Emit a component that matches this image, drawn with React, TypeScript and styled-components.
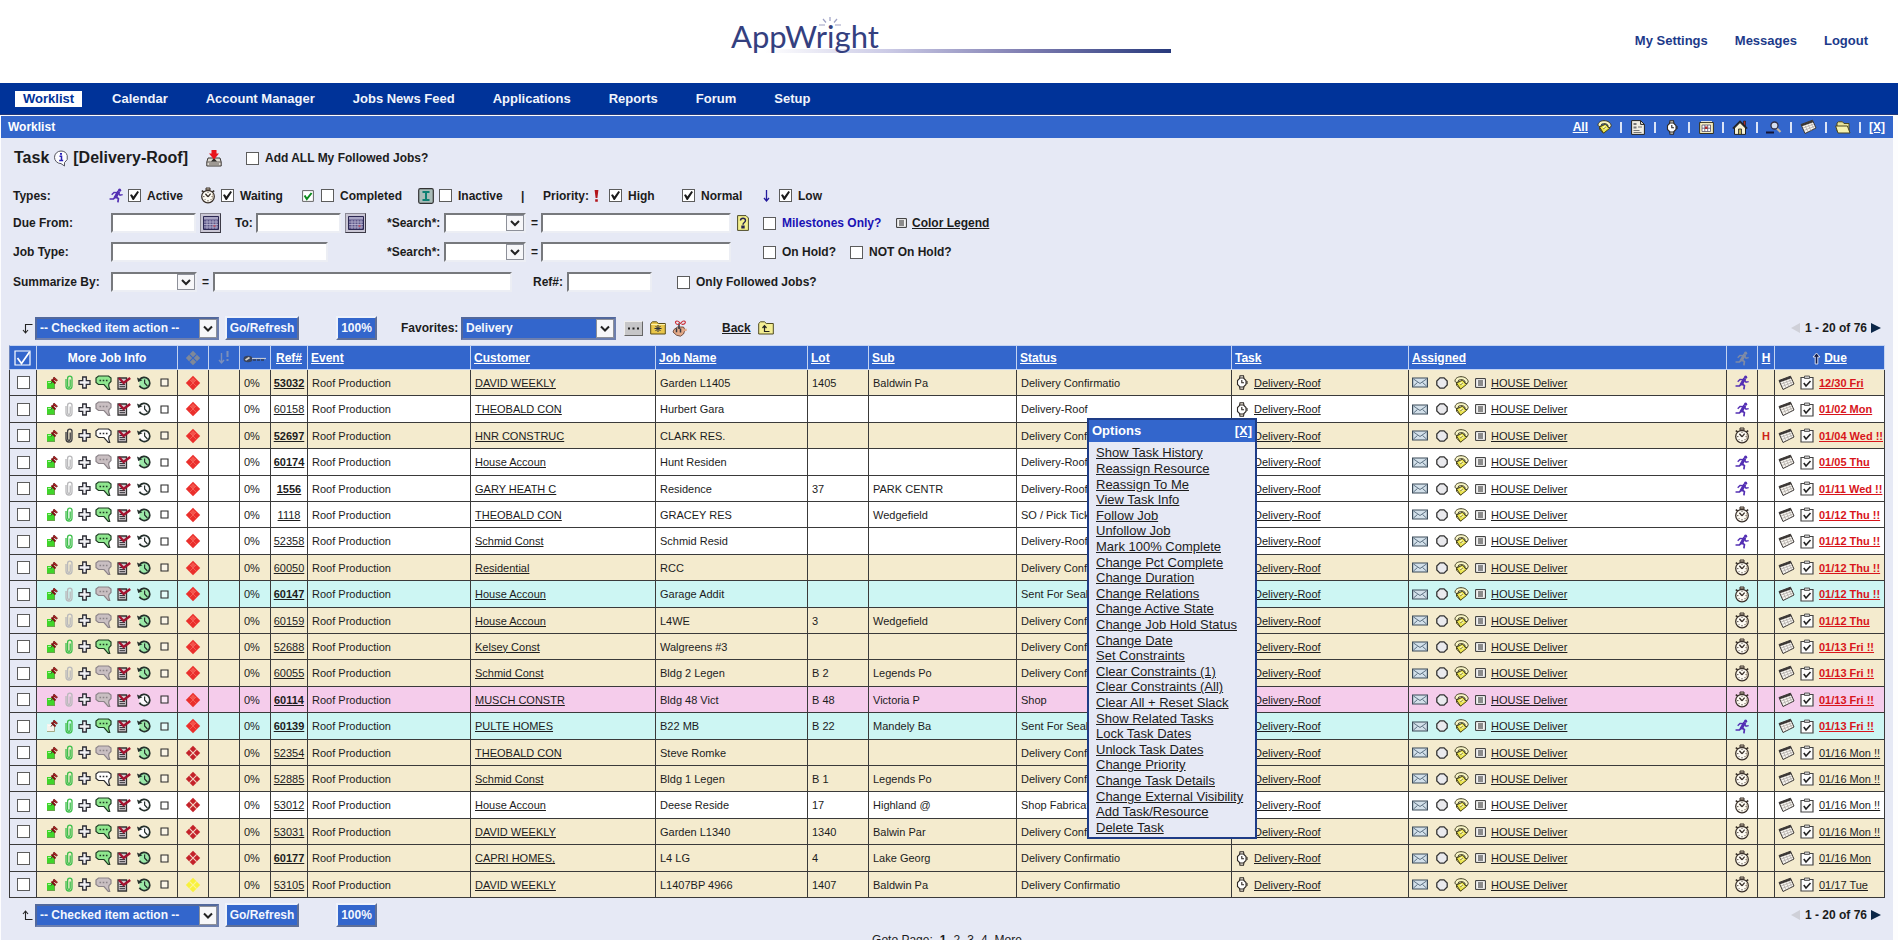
import React from "react";
import styled, { createGlobalStyle, css } from "styled-components";

const sans = '"Liberation Sans", Arial, sans-serif';
const c = {
  navy: "#003399",
  blue: "#3366cc",
  panel: "#e6e9f5",
  ink: "#1c1c1c",
  red: "#d8151b",
  line: "#3a3a3a",
};

const Global = createGlobalStyle`
  * { box-sizing: border-box; }
  body { margin: 0; background: #fdfdfe; font-family: ${sans}; font-size: 12px; color: ${c.ink}; }
  a { color: inherit; }
  svg { display: block; flex: none; }
`;

/* ---------- icons ---------- */

const Runner = ({ color = "#5430b4" }: { color?: string }) => (
  <svg width="14" height="15" viewBox="0 0 14 15" fill="none" stroke={color} strokeWidth="1.7" strokeLinecap="square">
    <circle cx="10.6" cy="2.2" r="1.6" fill={color} stroke="none" />
    <path d="M9 4.8 6.800 8.600" strokeWidth="3.200" />
    <path d="M8.400 4.600 5 4.400 3.200 6.200M9.800 5.400l1.200 1.800 2 -.4" strokeWidth="1.400" />
    <path d="M6.800 8.800 4.400 11H1.400M7 8.800l2.400 1.800-.4 3" />
  </svg>
);

const Stopwatch = () => (
  <svg width="16" height="17" viewBox="0 0 16 17" fill="none" stroke="#3a312b">
    <path d="M6 1h4v2H6z" fill="#d8cdb8" />
    <path d="M1.800 3.600l2 1.600M14.200 3.600l-2 1.600" strokeWidth="1.600" />
    <circle cx="8" cy="9.600" r="6.300" fill="#fdfaf2" strokeWidth="1.300" />
    <path d="M8 9.800 5.400 6.800M8 9.800l2.600-3.200" strokeWidth="1.300" />
    <path d="M8 4.600v1.200M8 13.200v1.200M3.200 9.600h1.200M11.600 9.600h1.200M4.800 12.800l.6-.6M11.200 12.800l-.6-.6" />
    <path d="M12.600 7c.8 2 .4 4.600-1.400 6.200" stroke="#b5a48c" />
  </svg>
);

const Watch = ({ light }: { light?: boolean }) => (
  <svg width="12" height="15" viewBox="0 0 12 15" fill="none" stroke="#2f2a26" strokeWidth="1.100">
    <path d="M3.500 3.500 4 .7h3.500l.5 2.800M3.500 11.500 4 14.300h3.500l.5-2.800" fill={light ? "#d8d4c8" : "#efe9dc"} />
    <path d="M4 3h3.500l2.500 2.500v4L7.500 12H4L1.500 9.500v-4z" fill="#fff" />
    <path d="M5.800 5v2.800H8M11 6v3" />
  </svg>
);

const Clip = ({ tone }: { tone: string }) => (
  <svg width="8" height="15" viewBox="0 0 8 15" fill="none" stroke={tone} strokeWidth="1.300">
    <path d="M1 4v7a3 3 0 0 0 6 0V3.300a2.200 2.200 0 0 0-4.400 0V11a1.300 1.300 0 0 0 2.600 0V4.500" />
  </svg>
);

const Pin = ({ fill }: { fill: string }) => (
  <svg width="12" height="14" viewBox="0 0 12 14">
    <path d="M1 5h6v1h2v7H1z" fill={fill} />
    <path d="M1 12.500h7.500V8" stroke="#7c8a5c" fill="none" strokeWidth=".7" />
    <path d="M2 6.500h3" stroke="#fff" opacity=".6" />
    <path d="m5 7.500 2-2.500" stroke="#333" />
    <path d="m5.500 3.500 4 4M7.500 3.800 9 2.200" stroke="#7c1010" strokeWidth="1.800" />
    <path d="m8 1 3.600 3.200-1.400 1L7 2.200z" fill="#b32020" stroke="#4d0b0b" strokeWidth=".5" />
  </svg>
);

const Plus = () => (
  <svg width="13" height="13" viewBox="0 0 13 13">
    <path d="M4.700 1h3.600v3.700H12v3.600H8.300V12H4.700V8.300H1V4.700h3.700z" fill="#f0f0f4" stroke="#2d2d35" strokeWidth="1.300" />
  </svg>
);

const Speech = ({ fill, line }: { fill: string; line: string }) => (
  <svg width="17" height="16" viewBox="0 0 17 16">
    <path d="M3.500 1h10l2.500 2v3.500l-2 2-.3 2.300 1 3.500h-1.500L9 9.500H3.500L1 7.500V3z" fill={fill} stroke={line} strokeWidth="1.200" />
    <path d="M4.500 5.500h1.600M7.700 5.500h1.600M10.900 5.500h1.600" stroke={line} strokeWidth="1.500" />
  </svg>
);

const Notes = () => (
  <svg width="14" height="14" viewBox="0 0 14 14">
    <path d="M1 2h8.500v11H1z" fill="#d3ccd0" stroke="#333" strokeWidth="1.300" />
    <path d="M2.500 6.500h5.500M2.500 8.600h5.500M2.500 10.700h5.500" stroke="#2d2d33" />
    <path d="m2 2 4.600 5L13.200 2" stroke="#a3122f" strokeWidth="2.400" fill="none" />
  </svg>
);

const History = ({ fill }: { fill: string }) => (
  <svg width="15" height="14" viewBox="0 0 15 14">
    <path d="M2.600 3.800A5.600 5.600 0 1 1 2.400 9.800" fill={fill} stroke="#25302c" strokeWidth="1.700" />
    <path d="M0 1.600 1.200 6l4.200-1.800z" fill="#25302c" />
    <path d="M7.600 3.500V7l2.800 3" stroke="#25302c" strokeWidth="1.200" fill="none" />
  </svg>
);

const Box = () => (
  <svg width="9" height="9" viewBox="0 0 9 9">
    <path d="M1 1h7v7H1z" fill="#fff" fillOpacity=".5" stroke="#2b2b2b" strokeWidth="1.100" />
  </svg>
);

const Diamond = ({ kind }: { kind: "solid" | "quad" | "yellow" | "head" }) => {
  const f = { solid: "#ea2f2c", quad: "#c4222a", yellow: "#f8f13c", head: "#7f8899" }[kind];
  const g = { solid: "#fa7a70", quad: "#f4d9c8", yellow: "#faf59a", head: "#3366cc" }[kind];
  return (
    <svg width="16" height="16" viewBox="0 0 16 16">
      <path d="M8 .8 15.200 8 8 15.200.8 8z" fill={f} />
      {kind === "solid" && <path d="M8 2.600 10.600 5.200 8 7.800 5.400 5.200z" fill="#f4544c" />}
      <path d="M4.400 4.400l7.200 7.200M11.600 4.400l-7.200 7.200" stroke={g} strokeWidth={kind === "solid" ? 0.6 : 1.1} />
    </svg>
  );
};

const Phone = () => (
  <svg width="15" height="14" viewBox="0 0 15 14">
    <path d="M2.500 7 8.500 4.200l4 4.300-6 4.700z" fill="#ece54e" stroke="#4c4718" />
    <path d="M2.500 7v2.200l4 4" fill="none" stroke="#4c4718" />
    <path d="M1 5.200C1 2.600 3.500.7 7 .7c3.800 0 6.800 2 7.200 5l-1 2-2-.3-.4-2.400C9.500 3.600 7 3.200 4.600 4.200L4 6.200l-2 .3z" fill="#f8f5c4" stroke="#3d3a20" />
    <path d="M6 7.500l2-1M7.500 9l2-1" stroke="#fffde0" strokeWidth="1.200" />
    <path d="M6.200 8.800l2.600-1.200" stroke="#5f5a1c" strokeWidth=".7" />
  </svg>
);

const Envelope = () => (
  <svg width="16" height="11" viewBox="0 0 16 11" fill="none">
    <path d="M.6 1h14.800v9H.6z" fill="#d3e0ea" stroke="#3b4a58" strokeWidth="1.200" />
    <path d="m1.500 2 6.500 4.500L14.500 2M1.500 9l4-3.500M14.500 9l-4-3.500" stroke="#5f7384" />
  </svg>
);

const Octagon = () => (
  <svg width="12" height="12" viewBox="0 0 12 12">
    <path d="M4 .8h4L11.200 4v4L8 11.200H4L.8 8V4z" fill="#eaeaee" stroke="#333" strokeWidth="1.300" />
  </svg>
);

const ListBox = () => (
  <svg width="11" height="10" viewBox="0 0 11 10">
    <path d="M.6.6h9.800v8.800H.6z" fill="#f4f4f4" stroke="#333" />
    <path d="M3 3h5M3 5h5M3 7h5" stroke="#222" />
  </svg>
);

const TiltCal = () => (
  <svg width="17" height="16" viewBox="0 0 17 16">
    <path d="M1 5.500 12.500 1.200 16 9 5 14.500z" fill="#f8f6f1" stroke="#3a3634" />
    <path d="M1 5.500 12.500 1.200l.8 2L2 7.300z" fill="#3a3634" />
    <path d="m3 9 11-4M4 11.500l11-4.500M5 6.300 8 13M8 5.200l3 6.600M11 4.200l3 6" stroke="#aaa5a0" strokeWidth=".7" />
  </svg>
);

const Clipboard = () => (
  <svg width="14" height="15" viewBox="0 0 14 15" fill="none">
    <path d="M1 2.500h12V14H1z" fill="#fdfdfd" stroke="#444" strokeWidth="1.200" />
    <path d="M4.500 1h5v2.500h-5z" fill="#c9c9c9" stroke="#444" strokeWidth=".8" />
    <path d="m3.800 8 2.200 3 4.500-5" stroke="#222" strokeWidth="1.600" />
  </svg>
);

const InfoBubble = () => (
  <svg width="16" height="17" viewBox="0 0 16 17">
    <path d="M8 1a6.500 6.300 0 0 1 3.500 11.600V16L8 13.600A6.500 6.300 0 0 1 8 1z" fill="#fdfdff" stroke="#55555f" />
    <path d="M6.500 6.200h2v4.300M6.200 10.500h4" fill="none" stroke="#2a22b8" strokeWidth="1.500" />
    <path d="M7 3h2v1.800H7z" fill="#2a22b8" />
  </svg>
);

const Import = () => (
  <svg width="16" height="17" viewBox="0 0 16 17">
    <path d="M2 8h12l1.200 4v4H.8v-4z" fill="#dedad2" stroke="#3a3633" />
    <path d="M1 12h14M3 14h10" stroke="#5e5954" />
    <path d="M5 11.500 8 8l3 3.500" fill="#2c2a28" />
    <path d="M5.500 0h5v3.500H13L8 9.500 3 3.500h2.500z" fill="#e8141c" />
  </svg>
);

const GreenCheck = () => (
  <svg width="12" height="12" viewBox="0 0 12 12" fill="none">
    <path d="M.6.600h10.800v10.800H.6z" fill="#fff" stroke="#666" />
    <path d="m2.600 5.500 2.200 3.500L9.600 3" stroke="#0b8a1c" strokeWidth="2" />
  </svg>
);

const InactiveMark = () => (
  <svg width="16" height="16" viewBox="0 0 16 16">
    <rect x=".7" y=".7" width="14.600" height="14.600" rx="1.500" fill="#a9bcb8" stroke="#333" strokeWidth="1.200" />
    <path d="M4.500 4h7M4.500 12h7M8 4v8" stroke="#0e7f72" strokeWidth="2" />
  </svg>
);

const Bang = () => (
  <svg width="5" height="12" viewBox="0 0 5 12">
    <path d="M.6 0h3.800L3.400 8H1.600zM1.200 9.300h2.600v2.500H1.200z" fill="#b3151b" />
  </svg>
);

const LowArrow = () => (
  <svg width="7" height="12" viewBox="0 0 7 12" fill="none" stroke="#241a9c" strokeWidth="1.300">
    <path d="M3.500 0v10.500M1 8l2.500 3L6 8" />
  </svg>
);

const CalGrid = () => (
  <svg width="16" height="14" viewBox="0 0 16 14">
    <path d="M.5.5h15v13H.5z" fill="#5d5688" stroke="#2b2752" />
    <path d="M1 1h14v2.500H1z" fill="#a9a5c4" />
    <path d="M1 6h14M1 8.500h14M1 11h14M4 4v9M7 4v9M10 4v9M13 4v9" stroke="#c9c4de" strokeWidth=".7" />
    <path d="M10.500 9h2v2h-2z" fill="#b5556b" />
  </svg>
);

const Help = () => (
  <svg width="12" height="16" viewBox="0 0 12 16">
    <path d="M.6.6h8.400l2.400 2.400v12.400H.6z" fill="#f4f08c" stroke="#4d4a2a" />
    <path d="M3.500 5.500c0-3 5-3 5 0 0 2-2.500 2-2.500 4.200M5 11.200h2v1.600H5z" fill="none" stroke="#27244f" strokeWidth="1.400" />
  </svg>
);

const Bend = ({ up }: { up?: boolean }) => (
  <svg width="11" height="11" viewBox="0 0 11 11" fill="none" stroke="#222" strokeWidth="1.100">
    {up ? <path d="M10.500 9.500H3.500V1M1 4l2.500-3L6 4" /> : <path d="M10.500 1.500H3.500V10M1 7l2.500 3L6 7" />}
  </svg>
);

const Dots = () => (
  <svg width="11" height="3" viewBox="0 0 11 3">
    <path d="M0 .5h2v2H0zM4.500.5h2v2h-2zM9 .5h2v2H9z" fill="#222" />
  </svg>
);

const FolderStar = () => (
  <svg width="16" height="14" viewBox="0 0 16 14">
    <path d="M.7 13V2.500L2.500.8h4l1.800 1.700h7v10.500z" fill="#e9c64a" stroke="#5b4d14" />
    <path d="M8 4v7M4.500 7.500h7M5.500 5l5 5M10.500 5l-5 5" stroke="#2b3140" />
    <path d="M1 3.500h14" stroke="#fbf0a8" />
  </svg>
);

const Hand = () => (
  <svg width="16" height="17" viewBox="0 0 16 17">
    <path d="M2 9.500 5.500 7h6l1.500 3-1.500 4-3 2.200-4-1L1 12z" fill="#e3a987" stroke="#573528" strokeWidth=".8" />
    <path d="M7 9V3.200M4.500 8.200v4M8.500 8.500v4" stroke="#35363f" strokeWidth="1.500" />
    <path d="m12 10.500 2.700-1" stroke="#e3a987" strokeWidth="2" />
    <path d="M7 4.500C3 5 2.500 1 5 1s2.500 2.500 3.500 2.500S9.500.6 12 1s1.500 4-2.500 3.200" fill="none" stroke="#cc2b33" strokeWidth="1.100" />
  </svg>
);

const FolderUp = () => (
  <svg width="16" height="14" viewBox="0 0 16 14">
    <path d="M.7 13V2.500L2.500.8h4l1.800 1.700h7v10.500z" fill="#f4ee94" stroke="#4f4a20" />
    <path d="M11.500 10.500H6.500V5M4.500 7l2-2.400L8.500 7" fill="none" stroke="#222" strokeWidth="1.200" />
  </svg>
);

const DocTree = () => (
  <svg width="14" height="15" viewBox="0 0 14 15">
    <path d="M.6.6h9l3.800 3.800v10H.6z" fill="#f1ede2" stroke="#222" />
    <path d="M9.600.6v3.800h3.800" fill="none" stroke="#222" />
    <path d="M2.500 3h3v2h-3zM2.500 6.500h3v2h-3z" fill="#777" />
    <path d="M2.500 10.500h6M2.500 12.500h8M7 7h4" stroke="#777" />
  </svg>
);

const CalBox = () => (
  <svg width="15" height="13" viewBox="0 0 15 13">
    <path d="M.6 1.500h13.800v11H.6z" fill="#f3ecc0" stroke="#36311c" />
    <path d="M2 .6h11" stroke="#f4f0dc" />
    <path d="M3 4h8.500v6.500H3zM3 7.200h8.500M5.800 4v6.500M8.700 4v6.500" fill="#fff" stroke="#55506a" strokeWidth=".8" />
    <path d="M6 5.500h2.500V8H6z" fill="#b32a2a" />
  </svg>
);

const House = () => (
  <svg width="16" height="15" viewBox="0 0 16 15">
    <path d="M11.500 1h2v5h-2z" fill="#b32a2a" stroke="#222" strokeWidth=".7" />
    <path d="M2.500 8 8 2.500 13.500 8v6.400h-11z" fill="#f7f2d4" stroke="#222" />
    <path d="M.8 8.500 8 1.300l7.200 7.200" fill="none" stroke="#222" strokeWidth="1.500" />
    <path d="M6.500 9h3v5.400h-3z" fill="#c2b45c" stroke="#222" strokeWidth=".8" />
  </svg>
);

const Magnifier = () => (
  <svg width="16" height="13" viewBox="0 0 16 13">
    <path d="m10.500 7 4 4" stroke="#c9b9a0" strokeWidth="2.200" />
    <circle cx="8.500" cy="4.500" r="3.500" fill="#d4def0" stroke="#332f44" strokeWidth="1.300" />
    <path d="M0 11.500h8" stroke="#141433" strokeWidth="2" />
  </svg>
);

const FolderOpen = () => (
  <svg width="16" height="13" viewBox="0 0 16 13">
    <path d="M2 10V2l1.500-1.200h4L9 2.500h5V11" fill="#e8e39a" stroke="#4b4720" />
    <path d="M.6 5h11.800l2.600 7H3z" fill="#f6f2ae" stroke="#4b4720" />
  </svg>
);

const Key = () => (
  <svg width="24" height="9" viewBox="0 0 24 9">
    <ellipse cx="5" cy="5" rx="4.500" ry="3.300" fill="#39435c" />
    <path d="m2.500 6 4-2.500" stroke="#d8d2c4" strokeWidth="1.800" />
    <path d="M9 4.500h14" stroke="#c3c9d6" strokeWidth="1.200" />
    <path d="M10 6h12" stroke="#2f3b58" strokeWidth="1.400" strokeDasharray="3 1" />
  </svg>
);

const SortMarks = () => (
  <svg width="12" height="14" viewBox="0 0 12 14" fill="none" stroke="#7b8fbb" strokeWidth="1.400">
    <path d="M3.500 2v10M1 9l2.500 3L6 9" />
    <path d="M9.500 0v6M9.500 8v2" strokeWidth="2" />
  </svg>
);

const HeadCheck = () => (
  <svg width="18" height="16" viewBox="0 0 18 16" fill="none" stroke="#fff">
    <path d="M1 1h15v14H1z" strokeWidth="1.200" />
    <path d="m3.500 8 4 5.500L15.500 2" strokeWidth="1.700" />
  </svg>
);

const UpArrow = () => (
  <svg width="9" height="13" viewBox="0 0 9 13">
    <path d="M3.200 12V5H1l3.500-4L8 5H5.800v7z" fill="#151c48" stroke="#e8ecf8" strokeWidth=".9" />
  </svg>
);

const Triangle = ({ left }: { left?: boolean }) => (
  <svg width="10" height="10" viewBox="0 0 10 10">
    {left ? <path d="M9 0v10L0 5z" fill="#cfd0d8" /> : <path d="M0 0v10l10-5z" fill="#0c2748" />}
  </svg>
);

const Logo = () => (
  <svg width="450" height="50" viewBox="0 0 450 50" role="img" aria-label="AppWright">
    <defs>
      <linearGradient id="rule" x1="0" x2="1">
        <stop offset="0" stopColor="#ffffff" />
        <stop offset=".3" stopColor="#cccbe6" />
        <stop offset=".65" stopColor="#7d7cb0" />
        <stop offset="1" stopColor="#27397c" />
      </linearGradient>
    </defs>
    <rect x="40" y="35" width="407" height="4" fill="url(#rule)" />
    <g stroke="#9da0c4" strokeWidth="1.200">
      <path d="M106 3v4M99 5l3 3.500M113 5l-3 3.500M95 11h6M117 11h-6" />
    </g>
    <text x="7" y="34" fontFamily="Lato, sans-serif" fontSize="31" fill="#34407f">
      AppWright
    </text>
  </svg>
);

/* ---------- page chrome ---------- */

const Masthead = styled.header`
  display: grid;
  grid-template-columns: 1fr auto 1fr;
  align-items: center;
  height: 83px;
  padding: 0 30px 2px;
  background: #fff;
`;

const LogoSlot = styled.div`
  grid-column: 2;
  margin-bottom: 3px;
`;

const UserLinks = styled.nav`
  display: flex;
  justify-content: flex-end;
  gap: 27px;
  font-size: 13px;
  font-weight: bold;
  color: #1c3a8a;
  a { text-decoration: none; }
`;

const MainNav = styled.nav`
  display: flex;
  align-items: center;
  gap: 22px;
  height: 32px;
  padding: 1px 0 0 15px;
  background: ${c.navy};
  border-bottom: 1px solid #23397a;
`;

const NavLink = styled.a<{ $current?: boolean }>`
  padding: 0 8px;
  font-size: 13px;
  font-weight: bold;
  line-height: 16px;
  text-decoration: none;
  color: ${(p) => (p.$current ? c.navy : "#f2f5fc")};
  background: ${(p) => (p.$current ? "#fff" : "transparent")};
`;

const Panel = styled.main`
  margin: 1px 5px 0 1px;
  padding-bottom: 12px;
  background: ${c.panel};
`;

const PanelBar = styled.div`
  display: flex;
  align-items: center;
  justify-content: space-between;
  height: 22px;
  padding: 0 8px 0 7px;
  background: ${c.blue};
  color: #fff;
  font-weight: bold;
`;

const PanelTitle = styled.h1`
  margin: 0;
  font-size: 12px;
`;

const BarTools = styled.div`
  display: flex;
  align-items: center;
  gap: 8px;
`;

const BarTool = styled.a`
  display: flex;
  justify-content: center;
  min-width: 16px;
`;

const Divider = styled.span`
  width: 2px;
  height: 11px;
  background: #dbe4f7;
`;

/* ---------- form parts ---------- */

const TickBox = styled.input.attrs({ type: "checkbox" })`
  appearance: none;
  flex: none;
  display: grid;
  place-items: center;
  width: 13px;
  height: 13px;
  margin: 0;
  background: #fff;
  border: 1px solid #5c5c5c;
  &:checked::before {
    content: "";
    width: 9px;
    height: 9px;
    background: #1b1b1b;
    clip-path: polygon(0 45%, 20% 35%, 38% 62%, 82% 0, 100% 12%, 42% 100%, 30% 100%);
  }
`;

const TextBox = styled.input.attrs({ type: "text" })<{ $w: number }>`
  width: ${(p) => p.$w}px;
  height: 20px;
  padding: 0 3px;
  font: 12px ${sans};
  background: #fff;
  border: 2px solid;
  border-color: #77797d #eceef4 #eceef4 #77797d;
`;

const Drop = styled.span<{ $w: number; $blue?: boolean }>`
  position: relative;
  display: block;
  width: ${(p) => p.$w}px;
  height: ${(p) => (p.$blue ? 23 : 20)}px;
  select {
    appearance: none;
    width: 100%;
    height: 100%;
    padding: 0 20px 0 3px;
    font: bold 12px ${sans};
    color: ${(p) => (p.$blue ? "#f4f7fe" : c.ink)};
    background: ${(p) => (p.$blue ? c.blue : "#fff")};
    border: 2px solid;
    border-color: ${(p) => (p.$blue ? "#52689c #6d7fae #6d7fae #52689c" : "#77797d #eceef4 #eceef4 #77797d")};
    border-radius: 0;
  }
  svg {
    position: absolute;
    top: 2px;
    right: 2px;
    pointer-events: none;
  }
`;

const Chevron = ({ h }: { h: number }) => (
  <svg width="18" height={h} viewBox={`0 0 18 ${h}`}>
    <rect x=".5" y=".5" width="17" height={h - 1} fill="#f7f7f9" stroke="#8d9099" />
    <path d={`M5 ${h / 2 - 2}l4 4 4-4`} fill="none" stroke="#222" strokeWidth="2" />
  </svg>
);

const Dropdown = ({ w, blue, label, children }: { w: number; blue?: boolean; label: string; children?: React.ReactNode }) => (
  <Drop $w={w} $blue={blue}>
    <select aria-label={label}>{children ?? <option value="" />}</select>
    <Chevron h={blue ? 19 : 16} />
  </Drop>
);

const CalButton = styled.button`
  display: grid;
  place-items: center;
  width: 21px;
  height: 20px;
  padding: 0;
  background: #c9c6d4;
  border: 1px solid;
  border-color: #8a8894 #3c3a46 #3c3a46 #8a8894;
`;

const Inline = styled.span<{ $gap?: number }>`
  display: flex;
  align-items: center;
  gap: ${(p) => p.$gap ?? 5}px;
`;

const CheckLabel = styled.label<{ $blue?: boolean }>`
  display: flex;
  align-items: center;
  gap: 6px;
  color: ${(p) => (p.$blue ? "#1a12b4" : "inherit")};
`;

const Check = ({ text, on, blue }: { text: string; on?: boolean; blue?: boolean }) => (
  <CheckLabel $blue={blue}>
    <TickBox defaultChecked={on} />
    {text}
  </CheckLabel>
);

const Filters = styled.form`
  padding-left: 12px;
  font-weight: bold;
  white-space: nowrap;
`;

const TitleRow = styled.div`
  display: flex;
  align-items: center;
  height: 40px;
  margin-bottom: 4px;
`;

const TaskTitle = styled.h2`
  display: flex;
  align-items: center;
  gap: 4px;
  margin: 0 18px 0 1px;
  font-size: 16px;
`;

const TitleCheck = styled.div`
  margin-left: 24px;
`;

const FilterRow = styled.div<{ $cols: string; $h: number }>`
  display: grid;
  grid-template-columns: ${(p) => p.$cols};
  align-items: center;
  height: ${(p) => p.$h}px;
`;

const Toolbar = styled.div`
  display: grid;
  grid-template-columns: 13px 190px 111px 65px 60px 163px 26px 22px 50px 36px 1fr auto;
  align-items: center;
  height: 34px;
  padding: 0 12px 0 21px;
  font-weight: bold;
  white-space: nowrap;
`;

const ToolbarTop = styled(Toolbar)`
  margin-top: 14px;
`;

const PushButton = styled.button<{ $w: number }>`
  width: ${(p) => p.$w}px;
  height: 24px;
  padding: 0;
  font: bold 12px ${sans};
  color: #f4f7fe;
  background: ${c.blue};
  border: 2px solid;
  border-color: #eef2fb #5f6f96 #5f6f96 #eef2fb;
`;

const DotsButton = styled.button`
  display: grid;
  place-items: center;
  width: 19px;
  height: 15px;
  padding: 0;
  background: #c6c6c8;
  border: 1px solid;
  border-color: #eee #666 #666 #eee;
`;

const Pager = styled.nav`
  grid-column: -2;
  display: flex;
  align-items: center;
  gap: 4px;
`;

/* ---------- work table ---------- */

const TableWrap = styled.div`
  padding: 0 8px;
`;

const Table = styled.table`
  width: 100%;
  table-layout: fixed;
  border-spacing: 0;
  font-size: 11px;
  white-space: nowrap;
`;

const Col = styled.col<{ $w?: number }>`
  width: ${(p) => (p.$w ? `${p.$w}px` : "auto")};
`;

const Th = styled.th<{ $center?: boolean }>`
  height: 25px;
  padding: 1px 3px 0;
  text-align: ${(p) => (p.$center ? "center" : "left")};
  font-size: 12px;
  color: #fff;
  background: ${c.blue};
  border: 1px solid #c4d3f1;
  border-left-width: 0;
  &:first-child { border-left: 1px solid #6d86bd; }
  svg { margin: 0 auto; }
`;

const DueHead = styled.div`
  display: flex;
  align-items: center;
  justify-content: center;
  gap: 3px;
  svg { margin: 0; }
`;

const tones = { tan: "#f4ebce", white: "#ffffff", cyan: "#cdf6f3", pink: "#f5cceb" };
type Tone = keyof typeof tones;

const Tr = styled.tr<{ $tone: Tone }>`
  background: ${(p) => tones[p.$tone]};
  height: 26px;
  &:nth-child(5n + 2), &:nth-child(5n + 4) { height: 27px; }
`;

const Td = styled.td<{ $center?: boolean }>`
  padding: 0 0 0 4px;
  border-right: 1px solid ${c.line};
  border-bottom: 1px solid ${c.line};
  ${(p) => p.$center && css`
    padding: 0;
    text-align: center;
    svg { margin: 0 auto; }
  `}
`;

const PickTd = styled(Td)`
  padding: 0;
  background: ${c.panel};
  border-left: 1px solid ${c.line};
  ${TickBox} { margin: 0 auto; }
`;

const AnchorTd = styled(Td)`
  position: relative;
`;

const JobIcons = styled.div`
  display: grid;
  grid-template-columns: 19px 13px 17px 22px 20px 23px auto;
  align-items: center;
  padding-left: 5px;
`;

const RefLink = styled.a<{ $bold?: boolean }>`
  font-weight: ${(p) => (p.$bold ? "bold" : "normal")};
`;

const AssignCell = styled.div`
  display: grid;
  grid-template-columns: 24px 18px 21px 16px auto;
  align-items: center;
  margin-left: -1px;
`;

const DueCell = styled.div`
  display: grid;
  grid-template-columns: 22px 19px auto;
  align-items: center;
  margin-left: -1px;
`;

const DueLink = styled.a<{ $late?: boolean }>`
  color: ${(p) => (p.$late ? c.red : c.ink)};
  font-weight: ${(p) => (p.$late ? "bold" : "normal")};
`;

const HoldMark = styled.b`
  color: #cc2418;
`;

/* ---------- options menu ---------- */

const Menu = styled.div`
  position: absolute;
  z-index: 2;
  top: 22px;
  left: 70px;
  width: 170px;
  background: ${c.panel};
  border: 2px solid #1e3c86;
  font-size: 13px;
`;

const MenuHead = styled.div`
  display: flex;
  align-items: center;
  justify-content: space-between;
  height: 22px;
  padding: 0 3px 1px;
  background: ${c.blue};
  color: #fff;
  font-weight: bold;
`;

const MenuList = styled.ul`
  margin: 0;
  padding: 3px 0 2px 7px;
  list-style: none;
`;

const MenuItem = styled.li`
  height: 16px;
  line-height: 16px;
  &:nth-child(5n + 3), &:nth-child(5n + 5) { height: 15px; }
`;

const Goto = styled.nav`
  display: flex;
  justify-content: center;
  gap: 7px;
  line-height: 16px;
  a { text-decoration: none; }
`;

/* ---------- data ---------- */

type Mark = "g" | "x" | "w";
type Row = {
  tone: Tone; ref: string; bold?: boolean; marks: [Mark, Mark, Mark]; cust: string; job: string; lot?: string; sub?: string;
  status: string; run?: boolean; hold?: boolean; due: string; soon?: boolean;
};

const DC = "Delivery Confirmatio";
const rows: Row[] = [
  { tone: "tan", ref: "53032", bold: true, marks: ["g", "g", "g"], cust: "DAVID WEEKLY", job: "Garden L1405", lot: "1405", sub: "Baldwin Pa", status: DC, run: true, due: "12/30 Fri" },
  { tone: "white", ref: "60158", marks: ["x", "x", "w"], cust: "THEOBALD CON", job: "Hurbert Gara", status: "Delivery-Roof", run: true, due: "01/02 Mon" },
  { tone: "tan", ref: "52697", bold: true, marks: ["w", "w", "w"], cust: "HNR CONSTRUC", job: "CLARK RES.", status: DC, hold: true, due: "01/04 Wed !!" },
  { tone: "white", ref: "60174", bold: true, marks: ["x", "x", "g"], cust: "House Accoun", job: "Hunt Residen", status: "Delivery-Roof", run: true, due: "01/05 Thu" },
  { tone: "white", ref: "1556", bold: true, marks: ["x", "g", "w"], cust: "GARY HEATH C", job: "Residence", lot: "37", sub: "PARK CENTR", status: "Delivery-Roof", run: true, due: "01/11 Wed !!" },
  { tone: "white", ref: "1118", marks: ["g", "g", "g"], cust: "THEOBALD CON", job: "GRACEY RES", sub: "Wedgefield", status: "SO / Pick Tick", due: "01/12 Thu !!" },
  { tone: "white", ref: "52358", marks: ["g", "g", "w"], cust: "Schmid Const", job: "Schmid Resid", status: "Delivery-Roof", run: true, due: "01/12 Thu !!" },
  { tone: "tan", ref: "60050", marks: ["x", "x", "g"], cust: "Residential", job: "RCC", status: DC, due: "01/12 Thu !!" },
  { tone: "cyan", ref: "60147", bold: true, marks: ["x", "x", "g"], cust: "House Accoun", job: "Garage Addit", status: "Sent For Seal", due: "01/12 Thu !!" },
  { tone: "tan", ref: "60159", marks: ["x", "x", "g"], cust: "House Accoun", job: "L4WE", lot: "3", sub: "Wedgefield", status: DC, due: "01/12 Thu" },
  { tone: "tan", ref: "52688", marks: ["g", "g", "g"], cust: "Kelsey Const", job: "Walgreens #3", status: DC, due: "01/13 Fri !!" },
  { tone: "tan", ref: "60055", marks: ["x", "x", "g"], cust: "Schmid Const", job: "Bldg 2 Legen", lot: "B 2", sub: "Legends Po", status: DC, due: "01/13 Fri !!" },
  { tone: "pink", ref: "60114", bold: true, marks: ["x", "x", "w"], cust: "MUSCH CONSTR", job: "Bldg 48 Vict", lot: "B 48", sub: "Victoria P", status: "Shop", due: "01/13 Fri !!" },
  { tone: "cyan", ref: "60139", bold: true, marks: ["g", "g", "g"], cust: "PULTE HOMES", job: "B22 MB", lot: "B 22", sub: "Mandely Ba", status: "Sent For Seal", run: true, due: "01/13 Fri !!" },
  { tone: "tan", ref: "52354", marks: ["g", "x", "g"], cust: "THEOBALD CON", job: "Steve Romke", status: DC, due: "01/16 Mon !!", soon: true },
  { tone: "tan", ref: "52885", marks: ["g", "w", "g"], cust: "Schmid Const", job: "Bldg 1 Legen", lot: "B 1", sub: "Legends Po", status: DC, due: "01/16 Mon !!", soon: true },
  { tone: "white", ref: "53012", marks: ["g", "g", "w"], cust: "House Accoun", job: "Deese Reside", lot: "17", sub: "Highland @", status: "Shop Fabricat", due: "01/16 Mon !!", soon: true },
  { tone: "tan", ref: "53031", marks: ["g", "g", "w"], cust: "DAVID WEEKLY", job: "Garden L1340", lot: "1340", sub: "Balwin Par", status: DC, due: "01/16 Mon !!", soon: true },
  { tone: "tan", ref: "60177", bold: true, marks: ["g", "g", "g"], cust: "CAPRI HOMES,", job: "L4 LG", lot: "4", sub: "Lake Georg", status: DC, due: "01/16 Mon", soon: true },
  { tone: "tan", ref: "53105", marks: ["g", "x", "g"], cust: "DAVID WEEKLY", job: "L1407BP 4966", lot: "1407", sub: "Baldwin Pa", status: DC, due: "01/17 Tue", soon: true },
];

const clipTone = { g: "#3fbf4c", x: "#b9b9bb", w: "#3c3c40" };
const speechTone = { g: ["#8fe78f", "#1d3b22"], x: ["#c9bfc2", "#8b8388"], w: ["#ffffff", "#2a2a2e"] };
const clockTone = { g: "#9be8a8", x: "#fff", w: "#fbfbfd" };

const navItems = ["Worklist", "Calendar", "Account Manager", "Jobs News Feed", "Applications", "Reports", "Forum", "Setup"];
const colWidths = [28, 141, 31, 31, 31, 37, 163, 185, 152, 61, 148, 215, 177, 0, 31, 17, 110];
const menuItems = [
  "Show Task History", "Reassign Resource", "Reassign To Me", "View Task Info", "Follow Job", "Unfollow Job",
  "Mark 100% Complete", "Change Pct Complete", "Change Duration", "Change Relations", "Change Active State",
  "Change Job Hold Status", "Change Date", "Set Constraints", "Clear Constraints (1)", "Clear Constraints (All)",
  "Clear All + Reset Slack", "Show Related Tasks", "Lock Task Dates", "Unlock Task Dates", "Change Priority",
  "Change Task Details", "Change External Visibility", "Add Task/Resource", "Delete Task",
];
const barTools: [string, React.ReactNode][] = [
  ["Documents", <DocTree />], ["Time", <Watch light />], ["Month", <CalBox />], ["Home", <House />],
  ["Find", <Magnifier />], ["Schedule", <TiltCal />], ["Files", <FolderOpen />],
];

/* ---------- sections ---------- */

const OptionsMenu = () => (
  <Menu>
    <MenuHead>
      Options <a href="#close">[X]</a>
    </MenuHead>
    <MenuList>
      {menuItems.map((m) => (
        <MenuItem key={m}><a href="#option">{m}</a></MenuItem>
      ))}
    </MenuList>
  </Menu>
);

const PageStatus = () => (
  <Pager aria-label="Rows shown">
    <Triangle left /> 1 - 20 of 76 <a href="#next" aria-label="Next page"><Triangle /></a>
  </Pager>
);

const CheckedAction = ({ up }: { up?: boolean }) => (
  <>
    <Bend up={up} />
    <Dropdown w={184} blue label="Checked item action"><option>-- Checked item action --</option></Dropdown>
    <PushButton $w={74}>Go/Refresh</PushButton>
    <PushButton $w={41}>100%</PushButton>
  </>
);

const JobRow = ({ r, i }: { r: Row; i: number }) => (
  <Tr $tone={r.tone}>
    <PickTd><TickBox aria-label={`Select job ${r.ref}`} /></PickTd>
    <Td>
      <JobIcons>
        <Pin fill={i === 13 ? "#f6f3ec" : "#3fd62a"} />
        <Clip tone={clipTone[r.marks[0]]} />
        <Plus />
        <Speech fill={speechTone[r.marks[1]][0]} line={speechTone[r.marks[1]][1]} />
        <Notes />
        <History fill={clockTone[r.marks[2]]} />
        <Box />
      </JobIcons>
    </Td>
    <Td $center><Diamond kind={i < 14 ? "solid" : i < 19 ? "quad" : "yellow"} /></Td>
    <Td />
    <Td>0%</Td>
    <Td $center><RefLink href="#job" $bold={r.bold}>{r.ref}</RefLink></Td>
    <Td>Roof Production</Td>
    <Td><a href="#customer">{r.cust}</a></Td>
    <Td>{r.job}</Td>
    <Td>{r.lot}</Td>
    <Td>{r.sub}</Td>
    {i === 1 ? <AnchorTd>{r.status}<OptionsMenu /></AnchorTd> : <Td>{r.status}</Td>}
    <Td><Inline $gap={6}><Watch /><a href="#task">Delivery-Roof</a></Inline></Td>
    <Td>
      <AssignCell>
        <Envelope /><Octagon /><Phone /><ListBox /><a href="#resource">HOUSE Deliver</a>
      </AssignCell>
    </Td>
    <Td $center>{r.run ? <Runner /> : <Stopwatch />}</Td>
    <Td $center>{r.hold && <HoldMark>H</HoldMark>}</Td>
    <Td>
      <DueCell>
        <TiltCal /><Clipboard /><DueLink href="#due" $late={!r.soon}>{r.due}</DueLink>
      </DueCell>
    </Td>
  </Tr>
);

export default function App() {
  return (
    <>
      <Global />
      <Masthead>
        <LogoSlot><Logo /></LogoSlot>
        <UserLinks aria-label="Account">
          <a href="#settings">My Settings</a>
          <a href="#messages">Messages</a>
          <a href="#logout">Logout</a>
        </UserLinks>
      </Masthead>
      <MainNav aria-label="Main">
        {navItems.map((n, i) => (
          <NavLink key={n} href="#nav" $current={i === 0}>{n}</NavLink>
        ))}
      </MainNav>
      <Panel>
        <PanelBar>
          <PanelTitle>Worklist</PanelTitle>
          <BarTools>
            <a href="#all">All</a>
            <BarTool href="#calls" aria-label="Calls"><Phone /></BarTool>
            {barTools.map(([name, icon]) => (
              <React.Fragment key={name}>
                <Divider />
                <BarTool href="#tool" aria-label={name}>{icon}</BarTool>
              </React.Fragment>
            ))}
            <Divider />
            <BarTool href="#close">[X]</BarTool>
          </BarTools>
        </PanelBar>

        <Filters>
          <TitleRow>
            <TaskTitle>Task <InfoBubble /> [Delivery-Roof]</TaskTitle>
            <Import />
            <TitleCheck><Check text="Add ALL My Followed Jobs?" /></TitleCheck>
          </TitleRow>

          <FilterRow $h={27} $cols="96px 91px 102px 116px 103px 22px 139px 81px auto">
            <span>Types:</span>
            <Inline><Runner /><Check text="Active" on /></Inline>
            <Inline><Stopwatch /><Check text="Waiting" on /></Inline>
            <Inline $gap={7}><GreenCheck /><Check text="Completed" /></Inline>
            <Inline><InactiveMark /><Check text="Inactive" /></Inline>
            <span>|</span>
            <Inline>Priority: <Inline $gap={10}><Bang /><Check text="High" on /></Inline></Inline>
            <Check text="Normal" on />
            <Inline $gap={9}><LowArrow /><Check text="Low" on /></Inline>
          </FilterRow>

          <FilterRow $h={28} $cols="98px 124px 21px 131px 57px 87px 10px 196px 26px 133px auto">
            <label htmlFor="from">Due From:</label>
            <Inline $gap={4}><TextBox id="from" $w={85} /><CalButton type="button" aria-label="Pick start date"><CalGrid /></CalButton></Inline>
            <label htmlFor="to">To:</label>
            <Inline $gap={4}><TextBox id="to" $w={85} /><CalButton type="button" aria-label="Pick end date"><CalGrid /></CalButton></Inline>
            <label htmlFor="s1">*Search*:</label>
            <Dropdown w={82} label="First search field" />
            <span>=</span>
            <TextBox id="s1" $w={190} />
            <Help />
            <Check text="Milestones Only?" blue />
            <Inline><ListBox /><a href="#legend">Color Legend</a></Inline>
          </FilterRow>

          <FilterRow $h={30} $cols="98px 276px 57px 87px 10px 222px 87px auto">
            <label htmlFor="type">Job Type:</label>
            <TextBox id="type" $w={217} />
            <label htmlFor="s2">*Search*:</label>
            <Dropdown w={82} label="Second search field" />
            <span>=</span>
            <TextBox id="s2" $w={190} />
            <Check text="On Hold?" />
            <Check text="NOT On Hold?" />
          </FilterRow>

          <FilterRow $h={30} $cols="98px 91px 11px 320px 34px 110px auto">
            <label htmlFor="sum">Summarize By:</label>
            <Dropdown w={86} label="Summarize by" />
            <span>=</span>
            <TextBox id="sum" $w={299} />
            <label htmlFor="ref">Ref#:</label>
            <TextBox id="ref" $w={85} />
            <Check text="Only Followed Jobs?" />
          </FilterRow>
        </Filters>

        <ToolbarTop>
          <CheckedAction />
          <span>Favorites:</span>
          <Dropdown w={155} blue label="Favorites"><option>Delivery</option></Dropdown>
          <DotsButton aria-label="More favorites"><Dots /></DotsButton>
          <FolderStar />
          <Hand />
          <a href="#back">Back</a>
          <FolderUp />
          <PageStatus />
        </ToolbarTop>

        <TableWrap>
          <Table>
            <colgroup>{colWidths.map((w, i) => <Col key={i} $w={w} />)}</colgroup>
            <thead>
              <tr>
                <Th><HeadCheck /></Th>
                <Th $center>More Job Info</Th>
                <Th><Diamond kind="head" /></Th>
                <Th><SortMarks /></Th>
                <Th><Key /></Th>
                <Th $center><a href="#sort">Ref#</a></Th>
                {["Event", "Customer", "Job Name", "Lot", "Sub", "Status", "Task", "Assigned"].map((h) => (
                  <Th key={h}><a href="#sort">{h}</a></Th>
                ))}
                <Th><Runner color="#7f8ba6" /></Th>
                <Th $center><a href="#sort">H</a></Th>
                <Th><DueHead><UpArrow /><a href="#sort">Due</a></DueHead></Th>
              </tr>
            </thead>
            <tbody>{rows.map((r, i) => <JobRow key={r.ref} r={r} i={i} />)}</tbody>
          </Table>
        </TableWrap>

        <Toolbar>
          <CheckedAction up />
          <PageStatus />
        </Toolbar>
        <Goto aria-label="Pages">
          <span>Goto Page:</span> <b>1</b> <a href="#2">2</a> <a href="#3">3</a> <a href="#4">4</a> <a href="#more">More</a>
        </Goto>
      </Panel>
    </>
  );
}
